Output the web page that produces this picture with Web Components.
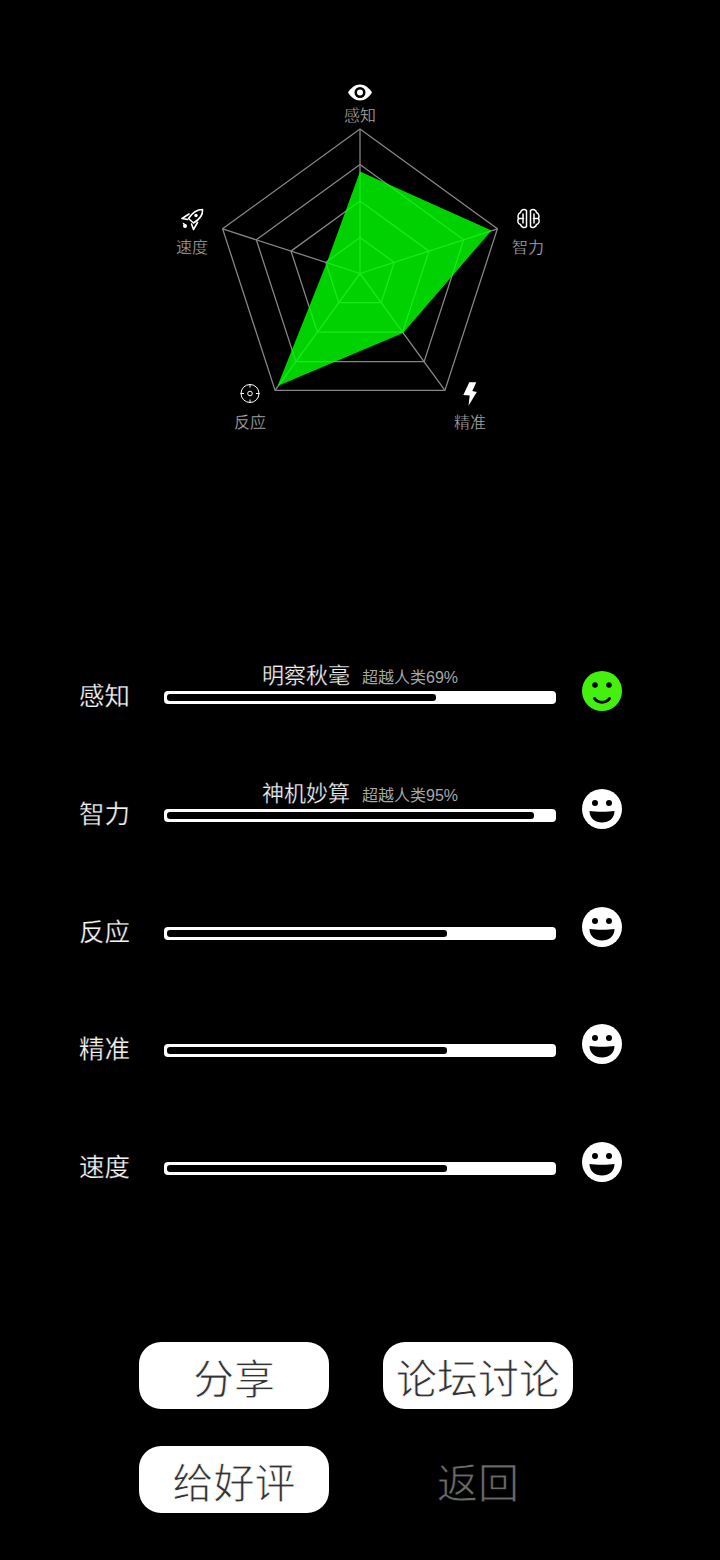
<!DOCTYPE html>
<html lang="zh">
<head>
<meta charset="utf-8">
<title>能力评估</title>
<style>
  html, body { margin: 0; background: #000; }
  body { width: 720px; height: 1560px; overflow: hidden; font-family: "Noto Sans CJK SC", "Noto Sans", sans-serif; }
  stat-list { margin-top: 191px; }
  button-grid { margin-top: 160px; }
</style>
</head>
<body>
<radar-chart></radar-chart>
<stat-list>
  <stat-row label="感知" title-text="明察秋毫" rank="超越人类69%" value="69.7" mood="smile"></stat-row>
  <stat-row label="智力" title-text="神机妙算" rank="超越人类95%" value="95" mood="grin"></stat-row>
  <stat-row label="反应" value="72.5" mood="grin"></stat-row>
  <stat-row label="精准" value="72.5" mood="grin"></stat-row>
  <stat-row label="速度" value="72.5" mood="grin"></stat-row>
</stat-list>
<button-grid>
  <pill-button>分享</pill-button>
  <pill-button>论坛讨论</pill-button>
  <pill-button>给好评</pill-button>
  <pill-button ghost>返回</pill-button>
</button-grid>

<script>
class RadarChart extends HTMLElement {
  constructor() {
    super();
    this.attachShadow({ mode: 'open' });
  }

  connectedCallback() {
    const cx = 360, cy = 273.5;
    const corner = (i, r) => {
      const a = (-90 + i * 72) * Math.PI / 180;
      return [cx + r * Math.cos(a), cy + r * Math.sin(a)];
    };
    const pts = list => list.map(p => p[0].toFixed(1) + ',' + p[1].toFixed(1)).join(' ');

    let grid = '';
    for (const r of [36, 72.5, 109, 144.5]) {
      grid += `<polygon points="${pts([0, 1, 2, 3, 4].map(i => corner(i, r)))}"/>`;
    }
    for (let i = 0; i < 5; i++) {
      const c = corner(i, 144.5);
      grid += `<line x1="${cx}" y1="${cy}" x2="${c[0]}" y2="${c[1]}"/>`;
    }

    const labels = [
      ['感知', 360, 113.5], ['智力', 528, 245.5], ['精准', 470, 420.5], ['反应', 250, 420.5], ['速度', 192, 245.5]
    ];

    this.shadowRoot.innerHTML = `
      <style>
        :host { display: block; position: relative; width: 720px; height: 480px; }
        svg { display: block; position: absolute; left: 0; top: 0; }
        .grid polygon, .grid line { fill: none; stroke: #858585; stroke-width: 1.3; }
        .tag {
          position: absolute;
          transform: translate(-50%, -50%);
          font-size: 16px;
          line-height: 20px;
          color: #b4b4b4;
          -webkit-text-stroke: 0.3px #000;
          white-space: nowrap;
        }
      </style>
      <svg width="720" height="480" viewBox="0 0 720 480">
        <g class="grid">${grid}</g>
        <polygon points="360,171.5 491.5,230.5 403,333 277.5,386 327,262" fill="#00ff00" fill-opacity="0.82"/>

        <!-- eye -->
        <path d="M348 92.500C351 88 355 84.500 360 84.500S369 88 372 92.500C369 97 365 100.500 360 100.500S351 97 348 92.500Z" fill="#fff"/>
        <circle cx="360" cy="92.500" r="5.500" fill="#000"/>
        <circle cx="360" cy="92.500" r="3" fill="#fff"/>

        <!-- brain -->
        <g fill="none" stroke="#fff" stroke-width="1.500" stroke-linejoin="round" stroke-linecap="round">
          <path d="M526.500 210.500C524 208.500 521 210 520.500 212.500C518 213.500 517.500 216.500 518.500 218.500C517 221 518 224 520.500 224.500C521 227 524.500 228.500 526.500 226.500Z"/>
          <path d="M530.500 210.500C533 208.500 536 210 536.500 212.500C539 213.500 539.500 216.500 538.500 218.500C540 221 539 224 536.500 224.500C536 227 532.500 228.500 530.500 226.500Z"/>
          <path d="M518.500 218.500H523.500M538.500 218.500H533.500M523 214V223M534 214V223"/>
        </g>

        <!-- rocket -->
        <g fill="none" stroke="#fff" stroke-width="1.600" stroke-linejoin="round" stroke-linecap="round">
          <path d="M202.500 209.500C197 209.500 192.500 212.500 188.500 218.500L193.500 223C199.500 219.500 203 214.500 202.500 209.500Z"/>
          <path d="M189 214L182 218.500L187.500 219.500"/>
          <path d="M197.500 222.500L193.500 229.500L191.500 224"/>
          <path d="M183.500 223.500L185.500 225.500"/>
        </g>
        <circle cx="196" cy="215.500" r="1.700" fill="#fff"/>
        <circle cx="185" cy="226" r="2" fill="#fff"/>

        <!-- target -->
        <g fill="none" stroke="#fff" stroke-width="1">
          <circle cx="250" cy="393.500" r="9"/>
          <circle cx="250" cy="393.500" r="2.300"/>
          <path d="M250 384V387.500M250 399.500V403M240.500 393.500H244M256 393.500H259.500"/>
        </g>

        <!-- bolt -->
        <path d="M469.300 382.300H476.300L472.300 391L476.800 392L468.500 405.800L469.700 395.500L463.300 395Z" fill="#fff"/>
      </svg>
      ${labels.map(l => `<span class="tag" style="left:${l[1]}px;top:${l[2]}px">${l[0]}</span>`).join('')}
    `;
  }
}

class StatList extends HTMLElement {
  constructor() {
    super();
    this.attachShadow({ mode: 'open' });
    this.shadowRoot.innerHTML = `
      <style>
        :host { display: flex; flex-direction: column; gap: 77.750px; padding-left: 79px; }
      </style>
      <slot></slot>
    `;
  }
}

class StatRow extends HTMLElement {
  constructor() {
    super();
    this.attachShadow({ mode: 'open' });
  }

  connectedCallback() {
    const title = this.getAttribute('title-text');
    const rank = this.getAttribute('rank');
    const face = this.getAttribute('mood') === 'smile'
      ? `<circle cx="20" cy="20" r="20" fill="#44f00e"/>
         <circle cx="13" cy="14" r="2.800" fill="#000"/>
         <circle cx="27" cy="14" r="2.800" fill="#000"/>
         <path d="M12.500 27.500C16 32.500 24 32.500 27.500 27.500" fill="none" stroke="#000" stroke-width="3" stroke-linecap="round"/>`
      : `<circle cx="20" cy="20" r="20" fill="#fff"/>
         <circle cx="13" cy="14" r="3" fill="#000"/>
         <circle cx="27" cy="14" r="3" fill="#000"/>
         <path d="M7.500 22C14 23 26 23 32.500 22C32.500 29 27 33.500 20 33.500S7.500 29 7.500 22Z" fill="#000"/>`;

    this.shadowRoot.innerHTML = `
      <style>
        :host { display: grid; grid-template-columns: 85px 392px 40px; height: 40px; }
        .label { font-size: 25.500px; line-height: 34px; color: #f2f2f2; margin-top: 6px; white-space: nowrap; -webkit-text-stroke: 0.25px #000; }
        .main { position: relative; padding-top: 20px; }
        .caption {
          position: absolute; left: 0; right: 0; top: -10px;
          display: flex; justify-content: center; align-items: baseline; gap: 12px;
          white-space: nowrap;
        }
        .title { font-size: 22px; line-height: 24px; color: #f0f0f0; -webkit-text-stroke: 0.25px #000; }
        .rank { font-family: "Liberation Sans", "Noto Sans CJK SC", sans-serif; font-size: 16px; line-height: 24px; color: #a6a6a6; }
        .track { height: 13px; box-sizing: border-box; padding: 3px; background: #fff; border-radius: 4px; }
        .fill { height: 7px; background: #000; border-radius: 3px; }
        svg { display: block; margin-left: 26px; }
      </style>
      <div class="label">${this.getAttribute('label')}</div>
      <div class="main">
        ${title ? `<div class="caption"><span class="title">${title}</span><span class="rank">${rank}</span></div>` : ''}
        <div class="track"><div class="fill" style="width:${this.getAttribute('value')}%"></div></div>
      </div>
      <svg width="40" height="40" viewBox="0 0 40 40">${face}</svg>
    `;
  }
}

class ButtonGrid extends HTMLElement {
  constructor() {
    super();
    this.attachShadow({ mode: 'open' });
    this.shadowRoot.innerHTML = `
      <style>
        :host { display: grid; grid-template-columns: 190px 190px; column-gap: 54px; row-gap: 37px; padding-left: 139px; }
      </style>
      <slot></slot>
    `;
  }
}

class PillButton extends HTMLElement {
  constructor() {
    super();
    this.attachShadow({ mode: 'open' });
    this.shadowRoot.innerHTML = `
      <style>
        :host {
          display: flex; align-items: center; justify-content: center;
          height: 67px; border-radius: 22px;
          background: #fff; color: #333;
          font-size: 41px; line-height: 67px; white-space: nowrap;
          -webkit-text-stroke: 0.8px #fff;
          padding-top: 2px; box-sizing: border-box;
        }
        :host([ghost]) { background: transparent; color: #6a6a6a; -webkit-text-stroke: 0.8px #000; }
      </style>
      <slot></slot>
    `;
  }
}

customElements.define('radar-chart', RadarChart);
customElements.define('stat-list', StatList);
customElements.define('stat-row', StatRow);
customElements.define('button-grid', ButtonGrid);
customElements.define('pill-button', PillButton);
</script>
</body>
</html>
